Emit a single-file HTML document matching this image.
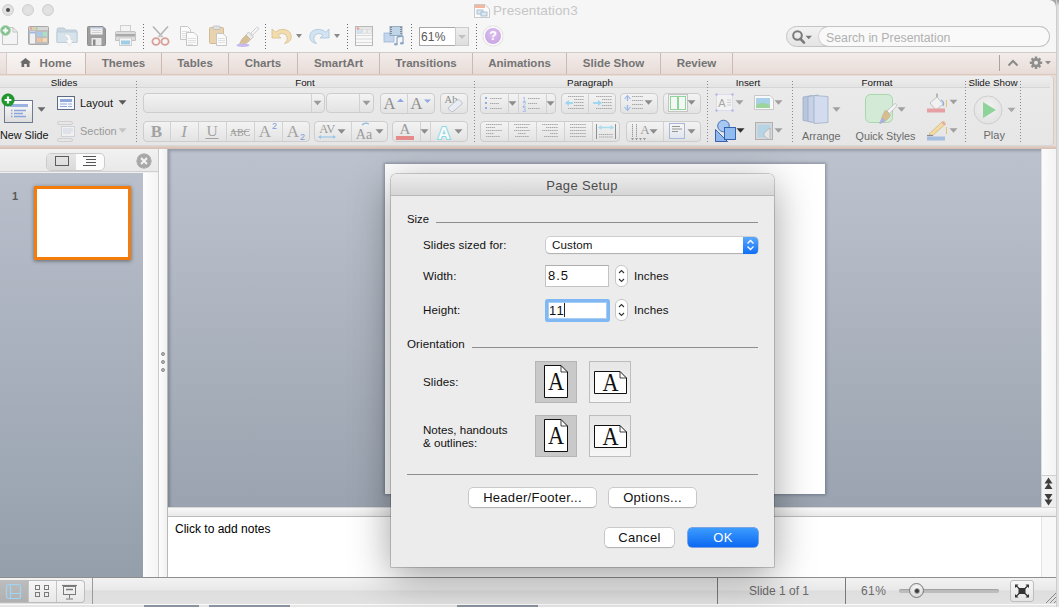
<!DOCTYPE html><html><head><meta charset="utf-8"><style>
*{margin:0;padding:0;box-sizing:border-box}
html,body{width:1059px;height:607px;overflow:hidden;background:#f6f6f6;font-family:"Liberation Sans",sans-serif}
.a{position:absolute}
svg.a{overflow:visible}
.tab{position:absolute;top:53px;height:21px;font-weight:bold;font-size:11.5px;color:#747474;text-align:center;line-height:21px;border-right:1px solid #cbb9b2}
.grp{position:absolute;top:77.2px;font-size:9.8px;color:#161616;text-align:center}
.dsep{position:absolute;width:1px;background:repeating-linear-gradient(#8a8a8a 0 1px,transparent 1px 3px)}
.tsep{position:absolute;top:24px;width:1px;height:25px;background:repeating-linear-gradient(#6a6a6a 0 1px,transparent 1px 3px)}
.bg{position:absolute;border:1px solid #cdcdcd;border-radius:4px;background:linear-gradient(#f3f3f3,#e3e3e3)}
.dv{position:absolute;top:0;bottom:0;width:1px;background:#d2d2d2}
.tri{position:absolute;width:0;height:0;border-left:4px solid transparent;border-right:4px solid transparent;border-top:5px solid #8c8c8c}
.rl{position:absolute;font-size:11px;color:#141414}
.btn{height:20px;border-radius:4px;background:#fff;box-shadow:0 0 0 .5px #a8a8a8,0 1px 1px rgba(0,0,0,.2);font-size:13px;letter-spacing:.3px;color:#111;text-align:center;line-height:20px}
</style></head><body>
<div class="a" style="left:0;top:0;width:1059px;height:52px;background:#f6f6f6"></div>
<div class="a" style="left:2px;top:4px;width:12px;height:12px;border-radius:50%;background:radial-gradient(#e4e4e4,#dcdcdc);border:1px solid #d0d0d0"></div>
<div class="a" style="left:22px;top:4px;width:12px;height:12px;border-radius:50%;background:radial-gradient(#e4e4e4,#dcdcdc);border:1px solid #d0d0d0"></div>
<div class="a" style="left:42px;top:4px;width:12px;height:12px;border-radius:50%;background:radial-gradient(#e4e4e4,#dcdcdc);border:1px solid #d0d0d0"></div>
<div class="a" style="left:6px;top:8px;width:4px;height:4px;border-radius:50%;background:#4a4a4a"></div>
<svg class="a" style="left:474px;top:4px" width="16" height="14"><path d="M.5 .5H11L15.5 5V13.5H.5Z" fill="#fbfbfb" stroke="#c9c9c9"/><rect x="1" y="1" width="10" height="3" fill="#f3b7a0"/><rect x="3" y="6" width="6" height="4" fill="#dde8f2" stroke="#9fb6cc" stroke-width=".8"/><rect x="7" y="8" width="6" height="4" fill="#dde8f2" stroke="#9fb6cc" stroke-width=".8"/></svg>
<div class="a" style="left:493px;top:3px;font-size:13.5px;color:#c6c6c6;letter-spacing:.12px">Presentation3</div>

<svg class="a" style="left:0;top:25px" width="20" height="22">
 <path d="M2.5 2.5H13L17.5 7V19.5H2.5Z" fill="#f4f4f4" stroke="#c4c4c4"/><path d="M13 2.5V7H17.5" fill="none" stroke="#c4c4c4"/>
 <circle cx="5.5" cy="5.5" r="4.8" fill="#7fc08a" stroke="#9ccca4"/><path d="M5.5 2.8V8.2M2.8 5.5H8.2" stroke="#fff" stroke-width="1.8"/></svg>
<svg class="a" style="left:28px;top:26px" width="21" height="20">
 <rect x=".5" y=".5" width="20" height="18" rx="1" fill="#bdbdbd" stroke="#a8a8a8"/><rect x="1" y="1" width="19" height="3" fill="#d8d8d8"/>
 <circle cx="3" cy="2.5" r="1.2" fill="#e9a090"/><circle cx="5.8" cy="2.5" r="1.2" fill="#e9c88a"/><circle cx="8.6" cy="2.5" r="1.2" fill="#9ed29a"/>
 <rect x="2" y="5" width="5" height="12.5" fill="#f0f0f0"/><rect x="2" y="5.5" width="5" height="2" fill="#9cb8e8"/>
 <rect x="9" y="6" width="4.5" height="4.5" fill="#a8c8f0"/><rect x="14.5" y="6" width="4.5" height="4.5" fill="#a8e0c8"/><rect x="9" y="12" width="4.5" height="4" fill="#f4c0a0"/><rect x="14.5" y="12" width="4.5" height="4" fill="#f4d8b0"/></svg>
<svg class="a" style="left:56px;top:26px" width="22" height="21">
 <path d="M1 3.5Q1 2 2.5 2H8L10 4H19.5Q21 4 21 5.5V16H1Z" fill="#c8d7e2" stroke="#b3c4d2" stroke-width=".8"/><path d="M1 6H21V16.5H1Z" fill="#d7e3ec" stroke="#b8c8d6" stroke-width=".8"/>
 <path d="M9 8Q15 8 15 14H17.5L13.5 19.5L9.5 14H12Q12 10.5 9 10Z" fill="#fafafa" stroke="#d8d8d8" stroke-width=".6"/></svg>
<svg class="a" style="left:87px;top:26px" width="19" height="20">
 <path d="M.5 1.5Q.5 .5 1.5 .5H16L18.5 3V18.5Q18.5 19.5 17.5 19.5H1.5Q.5 19.5 .5 18.5Z" fill="#9e9e9e" stroke="#8e8e8e"/>
 <rect x="3.5" y="1" width="12" height="7.5" fill="#f2f2f2"/><rect x="3.5" y="1" width="12" height="1.6" fill="#b8c8dc"/><path d="M5 4.5H14M5 6.5H14" stroke="#c8c8c8" stroke-width=".8"/>
 <rect x="4.5" y="12" width="10" height="7.5" fill="#e8e8e8"/><rect x="6" y="13.5" width="2.5" height="6" fill="#8a8a8a"/></svg>
<svg class="a" style="left:115px;top:25px" width="21" height="21">
 <rect x="5.5" y=".5" width="10" height="6" fill="#f4f4f4" stroke="#cfcfcf"/><path d="M1.5 6.5H19.5Q20.5 6.5 20.5 8V15.5H.5V8Q.5 6.5 1.5 6.5Z" fill="#dcdcdc" stroke="#c2c2c2"/>
 <rect x="1" y="9" width="19" height="2.5" fill="#a9a9a9"/><rect x="4.5" y="13" width="12" height="7.5" fill="#f6f6f6" stroke="#cdcdcd"/><rect x="6" y="15.5" width="9" height="4" fill="#a0cde6"/></svg>
<svg class="a" style="left:151px;top:26px" width="19" height="20">
 <path d="M2 .5L11.5 11M17 .5L7.5 11" stroke="#b4b4b4" stroke-width="1.6"/><circle cx="9.5" cy="10" r="1.2" fill="#ccc"/>
 <ellipse cx="5" cy="15.5" rx="3.6" ry="3.4" fill="none" stroke="#d8a096" stroke-width="1.8"/><ellipse cx="14" cy="15.5" rx="3.6" ry="3.4" fill="none" stroke="#d8a096" stroke-width="1.8"/></svg>
<svg class="a" style="left:180px;top:26px" width="19" height="20">
 <path d="M.5 .5H7.5L10.5 3.5V13.5H.5Z" fill="#fbfbfb" stroke="#c6c6c6"/><path d="M2 5.5H9M2 7.5H9M2 9.5H9M2 11.5H7" stroke="#cfcfcf" stroke-width=".6"/>
 <path d="M6.5 6.5H14L17.5 10V19.5H6.5Z" fill="#fbfbfb" stroke="#c6c6c6"/><path d="M8 12.5H16M8 14.5H16M8 16.5H16M8 18.5H13" stroke="#cfcfcf" stroke-width=".6"/></svg>
<svg class="a" style="left:209px;top:25px" width="19" height="21">
 <rect x=".5" y="2.5" width="14" height="16" rx="1" fill="#e8d3ae" stroke="#d2bb98"/><rect x="4" y="1" width="7" height="3.5" rx="1" fill="#e2e2e2" stroke="#b8b8b8" stroke-width=".7"/>
 <path d="M7.5 8.5H14L17.5 12V20.5H7.5Z" fill="#fbfbfb" stroke="#c6c6c6"/><path d="M9 13.5H16M9 15.5H16M9 17.5H16" stroke="#cfcfcf" stroke-width=".6"/></svg>
<svg class="a" style="left:236px;top:25px" width="23" height="22">
 <path d="M15 8L20.5 2.5Q22 1.5 22.5 3Q22.8 4 21.5 5L16.5 10.5Z" fill="#f6f6f6" stroke="#c4c4c4" stroke-width=".8"/>
 <path d="M12.5 7L17.5 12L14.5 14.5L10 10Z" fill="#ececec" stroke="#bdbdbd" stroke-width=".8"/>
 <path d="M10 10L14.5 14.5Q11 19.5 3 20Q5 14 10 10Z" fill="#d8c39c" stroke="#c4ad86" stroke-width=".6"/><path d="M6 16L11 12M7.5 17.5L12 13.5" stroke="#c6b08a" stroke-width=".5"/>
 <ellipse cx="7" cy="20.3" rx="6.5" ry="1.7" fill="#c6baf0"/></svg>
<svg class="a" style="left:271px;top:27px" width="22" height="18">
 <path d="M1 2V11H10L7 8.2Q8.8 6.5 11.5 6.5Q15.8 6.8 16.3 11Q16.5 14 13.5 16.5Q19.5 15.5 20.3 10.5Q20.5 3 12 2.3Q7.5 2.2 4.3 5Z" fill="#f3dcae" stroke="#d9bf8e" stroke-width=".8"/></svg>
<div class="tri" style="left:296px;top:34px;border-top-color:#8a8a8a;border-left-width:3.5px;border-right-width:3.5px;border-top-width:4px"></div>
<svg class="a" style="left:308px;top:27px" width="22" height="18">
 <path d="M21 2V11H12L15 8.2Q13.2 6.5 10.5 6.5Q6.2 6.8 5.7 11Q5.5 14 8.5 16.5Q2.5 15.5 1.7 10.5Q1.5 3 10 2.3Q14.5 2.2 17.7 5Z" fill="#d2e4f2" stroke="#a8c4dc" stroke-width=".8"/></svg>
<div class="tri" style="left:334px;top:34px;border-top-color:#8a8a8a;border-left-width:3.5px;border-right-width:3.5px;border-top-width:4px"></div>
<svg class="a" style="left:355px;top:26px" width="19" height="21">
 <rect x=".5" y=".5" width="17" height="19" fill="#f8f8f8" stroke="#b8b8b8"/><rect x="1" y="1" width="16" height="2" fill="#e6e6e6"/>
 <rect x="2" y="3.5" width="4.5" height="4" fill="#d4e4f4" stroke="#b8c8d8" stroke-width=".5"/><circle cx="3" cy="2.5" r="1.3" fill="#f0a090"/>
 <rect x="7.5" y="3.5" width="4" height="4" fill="#eee" stroke="#ccc" stroke-width=".5"/><rect x="12.5" y="3.5" width="4" height="4" fill="#eee" stroke="#ccc" stroke-width=".5"/>
 <path d="M1 9.5H17M1 13H17M1 16.5H17" stroke="#d0d0d0" stroke-width=".8"/></svg>
<svg class="a" style="left:383px;top:26px" width="22" height="20">
 <rect x="1" y="7" width="10" height="9" fill="#c3d6ee" stroke="#9eb7d6" stroke-width=".8"/>
 <rect x="7" y=".5" width="12" height="9" fill="#bed6e8" stroke="#8aa0b4" stroke-width=".8"/><path d="M8 1V9M18 1V9" stroke="#778" stroke-width="1.6" stroke-dasharray="1 1"/>
 <path d="M14 11V18M20 10V17" stroke="#8aa6c6" stroke-width="1.2"/><path d="M14 11L20 10" stroke="#8aa6c6" stroke-width="1.4"/><ellipse cx="12.8" cy="18.2" rx="1.8" ry="1.3" fill="#8aa6c6"/><ellipse cx="18.8" cy="17.2" rx="1.8" ry="1.3" fill="#8aa6c6"/></svg>

<div class="tsep" style="left:143px"></div>
<div class="tsep" style="left:265px"></div>
<div class="tsep" style="left:347px"></div>
<div class="tsep" style="left:411px"></div>
<div class="tsep" style="left:476px"></div>
<div class="a" style="left:419px;top:27px;width:36px;height:19px;background:#fff;border:1px solid #a9a9a9;border-right:none"></div>
<div class="a" style="left:455px;top:27px;width:14px;height:19px;background:linear-gradient(#eeeeee,#dedede);border:1px solid #cbcbcb"></div>
<div class="tri" style="left:458px;top:35px;border-top-color:#c2c2c2;border-left-width:4px;border-right-width:4px;border-top-width:4px"></div>
<div class="a" style="left:421px;top:29.5px;font-size:12px;color:#585858;letter-spacing:.2px">61%</div>
<div class="a" style="left:483px;top:26px;width:20px;height:20px;border-radius:50%;background:#fbfbfb;box-shadow:0 0 1px rgba(0,0,0,.35)"></div>
<div class="a" style="left:485px;top:28px;width:16px;height:16px;border-radius:50%;background:radial-gradient(circle at 50% 35%,#dcc0ef,#c49ee0)"></div>
<div class="a" style="left:485px;top:29px;width:16px;text-align:center;font-size:12.5px;font-weight:bold;color:#fff">?</div>
<div class="a" style="left:786px;top:26px;width:264px;height:21px;border-radius:10.5px;background:linear-gradient(#f2f2f2,#e4e4e4);border:1px solid #c4c4c4"></div>
<div class="a" style="left:818px;top:26px;width:232px;height:21px;border-radius:10.5px;background:#f9f9f9;border:1px solid #c4c4c4;border-left-color:#d2d2d2"></div>
<svg class="a" style="left:790px;top:29px" width="24" height="16"><circle cx="7.5" cy="6.5" r="4.3" fill="none" stroke="#7a7a7a" stroke-width="2"/><path d="M10.5 9.8L14 13.6" stroke="#7a7a7a" stroke-width="2.6" stroke-linecap="round"/><path d="M15.5 6.8H22L18.75 10.2Z" fill="#7a7a7a"/></svg>
<div class="a" style="left:826px;top:31px;font-size:12.3px;color:#b0b0b0">Search in Presentation</div>
<div class="a" style="left:0;top:52px;width:1059px;height:23px;background:linear-gradient(#f3ecea,#e7dbd6);border-top:1px solid #d0cac8"></div>
<div class="a" style="left:0;top:74px;width:1059px;height:2px;background:#dcc8bf"></div>
<div class="tab" style="left:6px;width:80px;background:linear-gradient(#f8f5f4,#f0e8e5);border-left:1px solid #d9ccc7">&nbsp;&nbsp;&nbsp;&nbsp;&nbsp;&nbsp;Home</div>
<svg class="a" style="left:20px;top:58px" width="11" height="9"><path d="M5.5 0L11 4.6H9.5V9H6.8V6H4.2V9H1.5V4.6H0Z" fill="#6a6a6a"/></svg>
<div class="tab" style="left:86px;width:76px">Themes</div>
<div class="tab" style="left:162px;width:67px">Tables</div>
<div class="tab" style="left:229px;width:69px">Charts</div>
<div class="tab" style="left:298px;width:82px">SmartArt</div>
<div class="tab" style="left:380px;width:93px">Transitions</div>
<div class="tab" style="left:473px;width:94px">Animations</div>
<div class="tab" style="left:567px;width:94px">Slide Show</div>
<div class="tab" style="left:661px;width:72px">Review</div>
<div class="a" style="left:999px;top:55px;width:1px;height:16px;background:#a9a3a0"></div>
<svg class="a" style="left:1007px;top:59px" width="12" height="8"><path d="M1.5 6.5L6 2L10.5 6.5" fill="none" stroke="#8a8a8a" stroke-width="2"/></svg>
<svg class="a" style="left:1028px;top:55px" width="24" height="16"><g transform="translate(8,7.7)" fill="#8e8e8e"><circle r="4.6"/><g stroke="#8e8e8e" stroke-width="2.4"><path d="M0 -6.2V6.2M-6.2 0H6.2M-4.4 -4.4L4.4 4.4M-4.4 4.4L4.4 -4.4"/></g><circle r="2" fill="#efe7e3"/></g><path d="M17 6H23L20 9.5Z" fill="#8e8e8e"/></svg>
<div class="a" style="left:0;top:75px;width:1059px;height:73px;background:#e8dcd7"></div>
<div class="a" style="left:0;top:76px;width:1053px;height:70px;background:linear-gradient(#ebebeb,#e6e6e6);border-radius:0 4px 4px 0;box-shadow:inset 0 -1px 0 #d7d7d7,1px 0 0 #d6c9c4"></div>
<div class="a" style="left:0;top:76px;width:1050px;height:12px;background:linear-gradient(#eeeeee,#e4e4e4);border-bottom:1px solid #d6d6d6"></div>
<div class="a" style="left:0;top:146px;width:1059px;height:3px;background:linear-gradient(#e2cfc6,#d6beb3)"></div>
<div class="grp" style="left:24px;width:80px">Slides</div>
<div class="grp" style="left:265px;width:80px">Font</div>
<div class="grp" style="left:550px;width:80px">Paragraph</div>
<div class="grp" style="left:708px;width:80px">Insert</div>
<div class="grp" style="left:837px;width:80px">Format</div>
<div class="grp" style="left:953px;width:80px">Slide Show</div>
<div class="dsep" style="left:136px;top:81px;height:62px"></div>
<div class="dsep" style="left:474px;top:81px;height:62px"></div>
<div class="dsep" style="left:707px;top:81px;height:62px"></div>
<div class="dsep" style="left:792px;top:81px;height:62px"></div>
<div class="dsep" style="left:965px;top:81px;height:62px"></div>
<div class="dsep" style="left:1020px;top:81px;height:62px"></div>
<div class="bg" style="left:143px;top:93px;width:182px;height:20px"><div class="dv" style="left:167px"></div></div>
<div class="bg" style="left:326px;top:93px;width:48px;height:20px"><div class="dv" style="left:32px"></div></div>
<div class="bg" style="left:380px;top:93px;width:55px;height:21px"><div class="dv" style="left:26px"></div></div>
<div class="bg" style="left:440px;top:93px;width:28px;height:21px"></div>
<div class="bg" style="left:143px;top:121px;width:167px;height:21px"><div class="dv" style="left:26px"></div><div class="dv" style="left:54px"></div><div class="dv" style="left:82px"></div><div class="dv" style="left:110px"></div><div class="dv" style="left:138px"></div></div>
<div class="bg" style="left:314px;top:121px;width:74px;height:21px"><div class="dv" style="left:36px"></div></div>
<div class="bg" style="left:392px;top:121px;width:76px;height:21px"><div class="dv" style="left:27px"></div><div class="dv" style="left:37px"></div></div>
<div class="bg" style="left:480px;top:93px;width:76px;height:21px"><div class="dv" style="left:27px"></div><div class="dv" style="left:37px"></div><div class="dv" style="left:65px"></div></div>
<div class="bg" style="left:561px;top:93px;width:55px;height:21px"><div class="dv" style="left:26px"></div></div>
<div class="bg" style="left:620px;top:93px;width:38px;height:21px"></div>
<div class="bg" style="left:663px;top:93px;width:38px;height:21px"></div>
<div class="bg" style="left:480px;top:121px;width:140px;height:21px"><div class="dv" style="left:27px"></div><div class="dv" style="left:55px"></div><div class="dv" style="left:83px"></div><div class="dv" style="left:111px"></div></div>
<div class="bg" style="left:626px;top:121px;width:75px;height:21px"><div class="dv" style="left:36px"></div></div>
<svg class="a" style="left:0;top:0" width="1059" height="607">
<rect x="4.5" y="100.5" width="28" height="22" fill="url(#gslide)" stroke="#6d7a90" stroke-width="1"/>
<rect x="10" y="104" width="18" height="3" fill="#9bb3e0"/>
<path d="M11 110.5h1.5M14 110.5h12M11 113.5h1.5M14 113.5h9M11 116.5h1.5M14 116.5h12" stroke="#8aa5dc" stroke-width="1.5"/>
<circle cx="8" cy="100" r="6.2" fill="#1e9a2a" stroke="#0f7a1a" stroke-width=".6"/><path d="M8 96.6V103.4M4.6 100H11.4" stroke="#fff" stroke-width="2.2"/>
<path d="M37.5 107.25H45.5L41.5 111.75Z" fill="#6a6a6a"/>
<rect x="57.5" y="96.5" width="17" height="13" fill="#f6f8fb" stroke="#5c6a82" stroke-width="1"/><rect x="60" y="99" width="12" height="3" fill="#8fa9dc"/><path d="M60 104h7M60 106.5h7M68 104h4M68 106.5h4" stroke="#8fa9dc" stroke-width="1.2"/>
<path d="M118.5 100.25H126.5L122.5 104.75Z" fill="#5a5a5a"/>
<rect x="57.5" y="121.5" width="15" height="3" rx="1.5" fill="none" stroke="#cfcfcf"/><rect x="61.5" y="126.5" width="13" height="10" fill="#f0f0f0" stroke="#cdd2da"/><path d="M63 129h10M63 131h10M63 133h8" stroke="#c5cde0" stroke-width=".8"/><rect x="57.5" y="138.5" width="15" height="3" rx="1.5" fill="none" stroke="#cfcfcf"/>
<path d="M118.5 128.25H126.5L122.5 132.75Z" fill="#c4c4c4"/>
<path d="M313.5 100.75H321.5L317.5 105.25Z" fill="#9a9a9a"/>
<path d="M362.5 100.75H370.5L366.5 105.25Z" fill="#9a9a9a"/>
<text x="389.5" y="108.5" font-family="Liberation Serif" font-size="16.5" fill="#8e8e8e" text-anchor="middle">A</text><path d="M397 102H404L400.5 98.5Z" fill="#92a8e0"/>
<text x="416.5" y="108.5" font-family="Liberation Serif" font-size="16.5" fill="#8e8e8e" text-anchor="middle">A</text><path d="M424 99.5H431L427.5 103Z" fill="#92a8e0"/>
<text x="451" y="103" font-family="Liberation Serif" font-size="10.5" fill="#8a8a8a" text-anchor="middle">Ab</text><path d="M449 107L457 100Q459 99 460.5 100.8L462 102.5Q462.5 104 461 105L453 111.5Q451.5 112 450.5 111L448.5 109Q448 108 449 107Z" fill="#e9ecf2" stroke="#a9b0bb" stroke-width=".7"/>
<text x="156.5" y="137" font-family="Liberation Serif" font-weight="bold" font-size="17" fill="#a2a2a2" text-anchor="middle">B</text>
<text x="184" y="137" font-family="Liberation Serif" font-style="italic" font-size="17" fill="#a2a2a2" text-anchor="middle">I</text>
<text x="212" y="135.5" font-family="Liberation Serif" font-size="15.5" fill="#a2a2a2" text-anchor="middle">U</text><path d="M205.5 138.5H218.5" stroke="#a2a2a2"/>
<text x="240" y="135.5" font-family="Liberation Serif" font-size="10" fill="#9a9a9a" text-anchor="middle">ABC</text><path d="M231 131.5H249" stroke="#9a9a9a" stroke-width=".8"/>
<text x="265" y="137" font-family="Liberation Serif" font-size="17" fill="#a2a2a2" text-anchor="middle">A</text><text x="274.5" y="129" font-family="Liberation Sans" font-size="9" fill="#7f98d8" text-anchor="middle">2</text>
<text x="293" y="137" font-family="Liberation Serif" font-size="17" fill="#a2a2a2" text-anchor="middle">A</text><text x="302.5" y="140" font-family="Liberation Sans" font-size="9" fill="#7f98d8" text-anchor="middle">2</text>
<text x="327" y="133" font-family="Liberation Serif" font-size="12.5" fill="#9a9a9a" text-anchor="middle" letter-spacing="-.5">AV</text><path d="M319 137H335" stroke="#9cc6e8" stroke-width="1.2"/><path d="M318 137L321 135V139ZM336 137L333 135V139Z" fill="#9cc6e8"/>
<path d="M337.5 129.25H345.5L341.5 133.75Z" fill="#8c8c8c"/>
<text x="364" y="139" font-family="Liberation Serif" font-size="14" fill="#9a9a9a" text-anchor="middle">Aa</text><path d="M362 125Q365 122 369 124" fill="none" stroke="#8fb8e0" stroke-width="1.2"/>
<path d="M375.5 129.25H383.5L379.5 133.75Z" fill="#8c8c8c"/>
<text x="405" y="134" font-family="Liberation Serif" font-size="15" fill="#9a9a9a" text-anchor="middle">A</text><rect x="396" y="136" width="18" height="4" fill="#e58a8a"/>
<path d="M420.5 129.25H428.5L424.5 133.75Z" fill="#8c8c8c"/>
<text x="444" y="139" font-family="Liberation Sans" font-weight="bold" font-size="17" fill="#fafafa" stroke="#8adbe6" stroke-width="2.2" paint-order="stroke" text-anchor="middle">A</text>
<path d="M454.5 129.25H462.5L458.5 133.75Z" fill="#8c8c8c"/>
<rect x="485" y="97" width="2" height="2" fill="#8faee6"/>
<path d="M490 98.5H502" stroke="#a8a8a8" stroke-width="1" stroke-dasharray="1.4 .5"/>
<rect x="485" y="102" width="2" height="2" fill="#8faee6"/>
<path d="M490 103.5H499" stroke="#a8a8a8" stroke-width="1" stroke-dasharray="1.4 .5"/>
<rect x="485" y="107" width="2" height="2" fill="#8faee6"/>
<path d="M490 108.5H502" stroke="#a8a8a8" stroke-width="1" stroke-dasharray="1.4 .5"/>
<path d="M508.5 101.25H516.5L512.5 105.75Z" fill="#8c8c8c"/>
<text x="524" y="102" font-family="Liberation Sans" font-size="6.5" fill="#8faee6" text-anchor="middle">1</text><text x="524" y="107" font-family="Liberation Sans" font-size="6.5" fill="#8faee6" text-anchor="middle">2</text><text x="524" y="112" font-family="Liberation Sans" font-size="6.5" fill="#8faee6" text-anchor="middle">3</text>
<path d="M528 98.5H540" stroke="#a8a8a8" stroke-width="1" stroke-dasharray="1.4 .5"/>
<path d="M528 103.5H537" stroke="#a8a8a8" stroke-width="1" stroke-dasharray="1.4 .5"/>
<path d="M528 108.5H540" stroke="#a8a8a8" stroke-width="1" stroke-dasharray="1.4 .5"/>
<path d="M546.5 101.25H554.5L550.5 105.75Z" fill="#8c8c8c"/>
<path d="M568 96.5H584" stroke="#a8a8a8" stroke-width="1" stroke-dasharray="1.4 .5"/>
<path d="M574 99.5H584" stroke="#a8a8a8" stroke-width="1" stroke-dasharray="1.4 .5"/>
<path d="M574 102.5H584" stroke="#a8a8a8" stroke-width="1" stroke-dasharray="1.4 .5"/>
<path d="M574 105.5H584" stroke="#a8a8a8" stroke-width="1" stroke-dasharray="1.4 .5"/>
<path d="M568 108.5H584" stroke="#a8a8a8" stroke-width="1" stroke-dasharray="1.4 .5"/>
<path d="M567 103H573" stroke="#9ad6f0" stroke-width="1.8"/><path d="M565 103L569 100V106Z" fill="#9ad6f0"/>
<path d="M596 96.5H612" stroke="#a8a8a8" stroke-width="1" stroke-dasharray="1.4 .5"/>
<path d="M602 99.5H612" stroke="#a8a8a8" stroke-width="1" stroke-dasharray="1.4 .5"/>
<path d="M602 102.5H612" stroke="#a8a8a8" stroke-width="1" stroke-dasharray="1.4 .5"/>
<path d="M602 105.5H612" stroke="#a8a8a8" stroke-width="1" stroke-dasharray="1.4 .5"/>
<path d="M596 108.5H612" stroke="#a8a8a8" stroke-width="1" stroke-dasharray="1.4 .5"/>
<path d="M593 103H599" stroke="#9ad6f0" stroke-width="1.8"/><path d="M602 103L598 100V106Z" fill="#9ad6f0"/>
<path d="M627.5 96V101M627.5 105V110" stroke="#9ab8e6" stroke-width="1.4"/><path d="M624.5 99L627.5 95.5L630.5 99M624.5 107L627.5 110.5L630.5 107" fill="none" stroke="#9ab8e6" stroke-width="1.1"/>
<path d="M632 96.5H643" stroke="#a8a8a8" stroke-width="1" stroke-dasharray="1.4 .5"/>
<path d="M632 100.5H643" stroke="#a8a8a8" stroke-width="1" stroke-dasharray="1.4 .5"/>
<path d="M632 104.5H643" stroke="#a8a8a8" stroke-width="1" stroke-dasharray="1.4 .5"/>
<path d="M632 108.5H643" stroke="#a8a8a8" stroke-width="1" stroke-dasharray="1.4 .5"/>
<path d="M644.5 100.25H652.5L648.5 104.75Z" fill="#8c8c8c"/>
<rect x="668.5" y="94.5" width="19" height="17" fill="#f4f4f4" stroke="#c4c4c4"/><rect x="670.5" y="96.5" width="7" height="13" fill="#f4f8f4" stroke="#8fd49a"/><rect x="678.5" y="96.5" width="7" height="13" fill="#f4f8f4" stroke="#8fd49a"/>
<path d="M687.5 100.25H695.5L691.5 104.75Z" fill="#8c8c8c"/>
<path d="M486 124.5H502" stroke="#a8a8a8" stroke-width="1" stroke-dasharray="1.4 .5"/><path d="M486 127.5H495" stroke="#a8a8a8" stroke-width="1" stroke-dasharray="1.4 .5"/><path d="M486 130.5H502" stroke="#a8a8a8" stroke-width="1" stroke-dasharray="1.4 .5"/><path d="M486 133.5H494" stroke="#a8a8a8" stroke-width="1" stroke-dasharray="1.4 .5"/><path d="M486 136.5H500" stroke="#a8a8a8" stroke-width="1" stroke-dasharray="1.4 .5"/>
<path d="M514 124.5H530" stroke="#a8a8a8" stroke-width="1" stroke-dasharray="1.4 .5"/><path d="M516 127.5H528" stroke="#a8a8a8" stroke-width="1" stroke-dasharray="1.4 .5"/><path d="M514 130.5H530" stroke="#a8a8a8" stroke-width="1" stroke-dasharray="1.4 .5"/><path d="M518 133.5H526" stroke="#a8a8a8" stroke-width="1" stroke-dasharray="1.4 .5"/><path d="M515 136.5H529" stroke="#a8a8a8" stroke-width="1" stroke-dasharray="1.4 .5"/>
<path d="M542 124.5H558" stroke="#a8a8a8" stroke-width="1" stroke-dasharray="1.4 .5"/><path d="M546 127.5H558" stroke="#a8a8a8" stroke-width="1" stroke-dasharray="1.4 .5"/><path d="M542 130.5H558" stroke="#a8a8a8" stroke-width="1" stroke-dasharray="1.4 .5"/><path d="M550 133.5H558" stroke="#a8a8a8" stroke-width="1" stroke-dasharray="1.4 .5"/><path d="M544 136.5H558" stroke="#a8a8a8" stroke-width="1" stroke-dasharray="1.4 .5"/>
<path d="M570 124.5H586" stroke="#a8a8a8" stroke-width="1" stroke-dasharray="1.4 .5"/><path d="M570 127.5H586" stroke="#a8a8a8" stroke-width="1" stroke-dasharray="1.4 .5"/><path d="M570 130.5H586" stroke="#a8a8a8" stroke-width="1" stroke-dasharray="1.4 .5"/><path d="M570 133.5H586" stroke="#a8a8a8" stroke-width="1" stroke-dasharray="1.4 .5"/><path d="M570 136.5H586" stroke="#a8a8a8" stroke-width="1" stroke-dasharray="1.4 .5"/>
<path d="M596.5 124V139M615.5 124V139" stroke="#8e8e8e"/><path d="M599 127.5H613" stroke="#a8dcef" stroke-width="1.5"/><path d="M598 127.5L601.5 125V130ZM614 127.5L610.5 125V130Z" fill="#a8dcef"/>
<path d="M599 134.5H613" stroke="#a8a8a8" stroke-width="1" stroke-dasharray="1.4 .5"/><path d="M599 137H613" stroke="#a8a8a8" stroke-width="1" stroke-dasharray="1.4 .5"/>
<path d="M632.5 124V137M636.5 124V137" stroke="#a0a0a0" stroke-dasharray="1.5 .5"/><text x="645" y="134" font-family="Liberation Serif" font-size="13" fill="#9a9a9a" text-anchor="middle">A</text>
<path d="M631 138H634L632.5 140.5ZM635 138H638L636.5 140.5ZM639 138H642L640.5 140.5ZM643 138H646L644.5 140.5Z" fill="#9a9a9a"/>
<path d="M649.5 129.25H657.5L653.5 133.75Z" fill="#8c8c8c"/>
<rect x="669.5" y="123.5" width="15" height="15" fill="url(#gbox)" stroke="#a9b8d8"/><path d="M672 126.5H680M672 129H682M672 131.5H678" stroke="#8a8a8a" stroke-width=".9"/>
<path d="M687.5 129.25H695.5L691.5 133.75Z" fill="#8c8c8c"/>
<rect x="716.5" y="94.5" width="16" height="16" fill="#f2f2f2" stroke="#c8c8ea" stroke-dasharray="1 1"/><circle cx="716.5" cy="94.5" r="1.2" fill="#b4b4ee"/><circle cx="732.5" cy="94.5" r="1.2" fill="#b4b4ee"/><circle cx="716.5" cy="110.5" r="1.2" fill="#b4b4ee"/><circle cx="732.5" cy="110.5" r="1.2" fill="#b4b4ee"/>
<text x="722" y="107" font-family="Liberation Sans" font-size="11" fill="#a6a6a6" text-anchor="middle">A</text><path d="M727 100h4M727 102.5h4M727 105h4" stroke="#c0c0c0" stroke-width=".7"/>
<path d="M735.5 100.25H743.5L739.5 104.75Z" fill="#a0a0a0"/>
<path d="M754.5 95.5H770L773.5 99V109.5H754.5Z" fill="#f8f8f8" stroke="#c8c8c8"/><rect x="756" y="98" width="14" height="10" fill="#a8d0e8"/><path d="M756 105Q762 101 770 105V108H756Z" fill="#9cd49c"/>
<path d="M774.5 100.25H782.5L778.5 104.75Z" fill="#a0a0a0"/>
<circle cx="723.5" cy="126" r="5.8" fill="#a6c8f2" stroke="#3d66b2" stroke-width=".9"/><path d="M715.5 141.5V129.5L727.5 141.5Z" fill="#8fb8ee" stroke="#2a56a8" stroke-width=".9"/><rect x="724.5" y="127.5" width="11" height="12" fill="#90bcf0" stroke="#2a56a8" stroke-width=".9"/>
<path d="M736.5 128.25H744.5L740.5 132.75Z" fill="#303030"/>
<rect x="755.5" y="122.5" width="17" height="17" fill="#d8d8d8" stroke="#b0b0b0"/><rect x="757.5" y="124.5" width="13" height="13" fill="#b6d4e6"/><path d="M764 133L770 128V140L764 136Z" fill="#e6e6e6" stroke="#a8a8a8" stroke-width=".6"/>
<path d="M774.5 128.25H782.5L778.5 132.75Z" fill="#a0a0a0"/>
<path d="M803 97L812 95.5V122L803 120.5Z" fill="#b9c5dc" stroke="#9aa8c2" stroke-width=".7"/><path d="M808 96.5L818 95V123L808 121.5Z" fill="#c6d2e6" stroke="#9aa8c2" stroke-width=".7"/><path d="M814 95.5L828 96.5V122.5L814 123.5Z" fill="#d2dcee" stroke="#9aa8c2" stroke-width=".7"/>
<path d="M832.5 107.25H840.5L836.5 111.75Z" fill="#a0a0a0"/>
<rect x="865.5" y="94.5" width="27" height="28" rx="5" fill="#d2ead6" stroke="#a6d8ac"/><path d="M887 111L894.5 104Q896.5 103 896.8 104.8Q897 105.8 896 106.6L889.5 113.5Z" fill="#f6f6f6" stroke="#b4b4b4" stroke-width=".7"/><path d="M885.5 110L890.5 115Q888 121 880 123.5Q882 115 885.5 110Z" fill="#d6be90" stroke="#c0a678" stroke-width=".5"/><path d="M879 123.8Q880.5 119.5 883 118L885.5 120.5Q882.5 123 879 123.8Z" fill="#a8b0ea"/>
<path d="M897.5 107.25H905.5L901.5 111.75Z" fill="#a0a0a0"/>
<path d="M930 103L937 97L943 104L936 110Z" fill="#f2f2f2" stroke="#b8b8b8" stroke-width=".8"/><path d="M937 97V93.5" stroke="#9a9a9a" stroke-width="1.3"/><path d="M941 100Q945 102 943 106" fill="none" stroke="#8fb0e6" stroke-width="1.2"/><rect x="927" y="108.5" width="18" height="4" fill="#e6a0a4"/><path d="M946.5 100V107" stroke="#e8c070"/>
<path d="M949.5 99.75H957.5L953.5 104.25Z" fill="#a0a0a0"/>
<path d="M929 134L942 122Q944 121 945 122.5Q946 124 944.5 125L932 136Z" fill="#f2dca0" stroke="#c8aa70" stroke-width=".6"/><path d="M942 122L945 125" stroke="#e8a0a8" stroke-width="1.6"/><path d="M927 135.5H933" stroke="#8a8a8a" stroke-width="1.2"/><rect x="927" y="136.5" width="18" height="4" fill="#a6bee0"/><path d="M946.5 127V134" stroke="#e8c070"/>
<path d="M949.5 128.25H957.5L953.5 132.75Z" fill="#a0a0a0"/>
<circle cx="988" cy="110" r="14" fill="url(#gplay)" stroke="#cfcfcf"/><path d="M983 102V118L996 110Z" fill="#8ed49a"/>
<path d="M1007.5 107.75H1015.5L1011.5 112.25Z" fill="#a8a8a8"/>
<defs><linearGradient id="gslide" x1="0" y1="0" x2="0" y2="1"><stop offset="0" stop-color="#fdfdfd"/><stop offset="1" stop-color="#dcdcdc"/></linearGradient>
<linearGradient id="gbox" x1="0" y1="0" x2="0" y2="1"><stop offset="0" stop-color="#f8f8f8"/><stop offset="1" stop-color="#dfe4ee"/></linearGradient>
<radialGradient id="gplay" cx=".5" cy=".4" r=".6"><stop offset="0" stop-color="#f2f2f2"/><stop offset="1" stop-color="#e2e2e2"/></radialGradient></defs>
</svg>
<div class="rl" style="left:0px;top:129px;font-size:10.8px">New Slide</div>
<div class="rl" style="left:80px;top:97px;font-size:11px">Layout</div>
<div class="rl" style="left:80px;top:125px;font-size:11px;color:#9a9a9a">Section</div>
<div class="rl" style="left:802px;top:129.5px;color:#6a6a6a;font-size:10.8px">Arrange</div>
<div class="rl" style="left:855.5px;top:129.5px;color:#6a6a6a;font-size:10.8px">Quick Styles</div>
<div class="rl" style="left:983.5px;top:129px;color:#6a6a6a;font-size:11px">Play</div>
<!-- content -->
<div class="a" style="left:0;top:149px;width:1059px;height:459px;background:#f0f0f0"></div>
<div class="a" style="left:0;top:149px;width:158px;height:23px;background:linear-gradient(#f1f1f1,#e9e9e9);border-bottom:1px solid #d0d0d0"></div>
<div class="a" style="left:46px;top:153px;width:59px;height:18px;border-radius:5px;background:#fbfbfb;border:1px solid #cbcbcb"></div>
<div class="a" style="left:47px;top:154px;width:29px;height:16px;border-radius:4px 0 0 4px;background:linear-gradient(#e6e6e6,#dadada)"></div>
<div class="a" style="left:55px;top:156px;width:14px;height:10px;border:1.5px solid #5c5c5c"></div>
<svg class="a" style="left:82px;top:155px" width="16" height="12"><path d="M1 1.5H14M4 4.5H14M4 7.5H14M1 10.5H14" stroke="#555" stroke-width="1.1"/></svg>
<div class="a" style="left:137px;top:154px;width:14px;height:14px;border-radius:50%;background:radial-gradient(#b4b4b4,#9c9c9c);box-shadow:0 0 0 .5px #8a8a8a"></div>
<svg class="a" style="left:137px;top:154px" width="14" height="14"><path d="M4 4L10 10M10 4L4 10" stroke="#f4f4f4" stroke-width="1.8"/></svg>
<div class="a" style="left:0;top:173px;width:143px;height:404px;background:linear-gradient(#b9bfcb,#959fac)"></div>
<div class="a" style="left:143px;top:173px;width:15px;height:404px;background:linear-gradient(90deg,#fdfdfd,#f4f4f4)"></div>
<div class="a" style="left:158px;top:149px;width:1px;height:428px;background:#c9c9c9"></div>
<div class="a" style="left:159px;top:149px;width:9px;height:428px;background:linear-gradient(90deg,#fdfdfd,#f0f0f0);border-right:1px solid #b9b9b9"></div>
<div class="a" style="left:161px;top:352px;width:4px;height:4px;border-radius:50%;background:#bdbdbd;border:.5px solid #888"></div>
<div class="a" style="left:161px;top:360px;width:4px;height:4px;border-radius:50%;background:#bdbdbd;border:.5px solid #888"></div>
<div class="a" style="left:161px;top:368px;width:4px;height:4px;border-radius:50%;background:#bdbdbd;border:.5px solid #888"></div>
<div class="a" style="left:12px;top:190px;font-size:11px;font-weight:bold;color:#5a5a5a">1</div>
<div class="a" style="left:34px;top:186px;width:97px;height:74px;background:#fff;border:3px solid #f47c0c;box-shadow:0 1px 4px rgba(0,0,0,.45)"></div>

<div class="a" style="left:168px;top:149px;width:873px;height:358px;background:linear-gradient(#bdc3ce,#9aa3af);box-shadow:inset 2px 2px 3px rgba(40,50,70,.28)"></div>
<div class="a" style="left:1041px;top:149px;width:15px;height:358px;background:linear-gradient(90deg,#fbfbfb,#f3f3f3);border-left:1px solid #dedede"></div>
<div class="a" style="left:1041px;top:475px;width:15px;height:32px;background:linear-gradient(90deg,#f4f4f4,#ececec);border-top:1px solid #cfcfcf;border-left:1px solid #d6d6d6"></div>
<svg class="a" style="left:1041px;top:476px" width="15" height="31"><path d="M3.5 7.5L7.5 1.5L11.5 7.5ZM3.5 13L7.5 7L11.5 13ZM3.5 18L7.5 24L11.5 18ZM3.5 23.5L7.5 29.5L11.5 23.5Z" fill="#3e3e3e"/></svg>
<div class="a" style="left:1056px;top:149px;width:3px;height:459px;background:#e4e4e4;border-left:1px solid #c8c8c8"></div>
<div class="a" style="left:168px;top:507px;width:888px;height:10px;background:linear-gradient(#f8f8f8,#e9e9e9);border-top:1px solid #d8d8d8;border-bottom:1px solid #bcbcbc"></div>
<div class="a" style="left:168px;top:517px;width:873px;height:60px;background:#fff"></div>
<div class="a" style="left:1041px;top:517px;width:15px;height:60px;background:#f8f8f8;border-left:1px solid #e2e2e2"></div>
<div class="a" style="left:175px;top:522px;font-size:12px;color:#000">Click to add notes</div>

<!-- slide -->
<div class="a" style="left:385px;top:164px;width:440px;height:330px;background:#fff;box-shadow:0 0 3px 1px rgba(50,60,80,.42)"></div>

<!-- status bar -->
<div class="a" style="left:0;top:577px;width:1059px;height:1px;background:#8e8e8e"></div>
<div class="a" style="left:0;top:578px;width:1059px;height:26px;background:linear-gradient(#f2f2f2 0%,#e9e9e9 45%,#dedede 50%,#e2e2e2 100%)"></div>
<div class="a" style="left:0;top:604px;width:1059px;height:3px;background:#e6e6e6;border-top:1px solid #fafafa"></div>
<div class="a" style="left:144px;top:605px;width:55px;height:2px;background:#8a93a0"></div>
<div class="a" style="left:209px;top:605px;width:81px;height:2px;background:#8a93a0"></div>
<div class="a" style="left:457px;top:605px;width:81px;height:2px;background:#8a93a0"></div>
<div class="a" style="left:0;top:580px;width:85px;height:23px;border-radius:0 4px 4px 0;background:linear-gradient(#f6f6f6,#e8e8e8);border:1px solid #bdbdbd;border-left:none"></div>
<div class="a" style="left:0;top:581px;width:28px;height:21px;background:linear-gradient(#bcbcbc,#b0b0b0)"></div>
<div class="a" style="left:28px;top:581px;width:1px;height:21px;background:#c4c4c4"></div>
<div class="a" style="left:56px;top:581px;width:1px;height:21px;background:#c4c4c4"></div>
<svg class="a" style="left:0;top:580px" width="85" height="23"><rect x="6.5" y="4.5" width="14" height="14" rx="2" fill="none" stroke="#9fd4f4" stroke-width="1.2"/><path d="M10.5 5V18M11 13.5H20" stroke="#9fd4f4" stroke-width="1.2"/>
<rect x="35.5" y="5.5" width="4" height="4" fill="none" stroke="#7a7a7a"/><rect x="44.5" y="5.5" width="4" height="4" fill="none" stroke="#7a7a7a"/><rect x="35.5" y="12.5" width="4" height="4" fill="none" stroke="#7a7a7a"/><rect x="44.5" y="12.5" width="4" height="4" fill="none" stroke="#7a7a7a"/>
<path d="M62 5.5H77" stroke="#7a7a7a" stroke-width="1.2"/><rect x="63.5" y="6.5" width="12" height="8" fill="none" stroke="#7a7a7a"/><path d="M66 9.5H73" stroke="#7a7a7a" stroke-width="1.5"/><path d="M69.5 15V18.5M66 19H73" stroke="#7a7a7a"/></svg>
<div class="a" style="left:92px;top:578px;width:1px;height:26px;background:#9a9a9a"></div>
<div class="a" style="left:717px;top:578px;width:1px;height:26px;background:#7a7a7a"></div>
<div class="a" style="left:845px;top:578px;width:1px;height:26px;background:#7a7a7a"></div>
<div class="a" style="left:749px;top:584px;font-size:12px;color:#6a6a6a">Slide 1 of 1</div>
<div class="a" style="left:861px;top:584px;font-size:12px;color:#6a6a6a;letter-spacing:.4px">61%</div>
<div class="a" style="left:899px;top:589px;width:100px;height:4px;border-radius:2px;background:#bdbdbd;box-shadow:inset 0 1px 1px rgba(0,0,0,.15)"></div>
<div class="a" style="left:909px;top:583px;width:15px;height:15px;border-radius:50%;background:radial-gradient(circle at 50% 35%,#fdfdfd,#cfcfcf);border:1px solid #7a7a7a"></div>
<div class="a" style="left:913.5px;top:587.5px;width:6px;height:6px;border-radius:50%;background:#3a3a3a;border:1.5px solid #a8a8a8"></div>
<div class="a" style="left:1010px;top:580px;width:24px;height:22px;border-radius:3px;background:linear-gradient(#f8f8f8,#e4e4e4);border:1px solid #bebebe"></div>
<svg class="a" style="left:1010px;top:580px" width="24" height="22"><rect x="8.5" y="8" width="7" height="6" fill="#333"/><path d="M6 5.5L9 8.5M18 5.5L15 8.5M6 16.5L9 13.5M18 16.5L15 13.5" stroke="#333" stroke-width="1.2"/><path d="M5 4.5H8.5L5 8ZM19 4.5H15.5L19 8ZM5 17.5H8.5L5 14ZM19 17.5H15.5L19 14Z" fill="#333"/></svg>
<svg class="a" style="left:1044px;top:591px" width="13" height="13"><path d="M12 2L2 12M12 6L6 12M12 10L10 12" stroke="#8a8a8a" stroke-width="1"/></svg>

<!-- dialog shadow + body -->
<div class="a" style="left:391px;top:174px;width:383px;height:393px;background:#ececec;border-radius:5px 5px 0 0;box-shadow:0 10px 40px rgba(0,0,0,.38),0 0 0 .5px rgba(0,0,0,.35)"></div>
<div class="a" style="left:391px;top:174px;width:383px;height:21.5px;background:linear-gradient(#ececec,#d6d6d6);border-radius:5px 5px 0 0;border-bottom:1px solid #b8b8b8"></div>
<div class="a" style="left:390px;top:178px;width:384px;text-align:center;font-size:13px;color:#4d4d4d;letter-spacing:.35px">Page Setup</div>

<div class="a" style="left:1056px;top:0;width:3px;height:607px;background:linear-gradient(#9a9a9a 0,#dedede 6px,#e4e4e4 100%);border-left:1px solid #cdcdcd"></div>
<svg class="a" style="left:1049px;top:0" width="10" height="8"><path d="M0 0H7V7A7 7 0 0 0 0 0Z" fill="#a8a8a8"/></svg>
<!-- dialog content -->
<div class="a" style="left:407px;top:213px;font-size:11.3px;color:#111">Size</div>
<div class="a" style="left:436px;top:222px;width:322px;height:1px;background:#8e8e8e"></div>
<div class="a" style="left:423px;top:238px;font-size:11.6px;color:#111;letter-spacing:.1px">Slides sized for:</div>
<div class="a" style="left:546px;top:237px;width:212px;height:16px;border-radius:4px;background:#fff;box-shadow:0 0 0 .5px #b0b0b0,0 1px 1px rgba(0,0,0,.25)"></div>
<div class="a" style="left:743px;top:236.5px;width:15px;height:17px;border-radius:0 4px 4px 0;background:linear-gradient(#5aa9ff,#0f6ff5)"></div>
<svg class="a" style="left:743px;top:236px" width="15" height="18"><path d="M4.5 7.5 L7.5 4.5 L10.5 7.5 M4.5 10.5 L7.5 13.5 L10.5 10.5" stroke="#fff" stroke-width="1.3" fill="none"/></svg>
<div class="a" style="left:552px;top:238px;font-size:11.6px;color:#111;letter-spacing:.1px">Custom</div>

<div class="a" style="left:423px;top:269px;font-size:11.6px;color:#111;letter-spacing:.1px">Width:</div>
<div class="a" style="left:545px;top:265px;width:64px;height:22px;background:#fff;border:1px solid #c3c3c3;border-top-color:#adadad"></div>
<div class="a" style="left:548px;top:268px;font-size:13px;color:#111;letter-spacing:.9px">8.5</div>
<div class="a" style="left:615px;top:265px;width:13px;height:22px;border-radius:6px;background:#fff;border:1px solid #c6c6c6"></div>
<svg class="a" style="left:615px;top:265px" width="13" height="22"><path d="M4 8 L6.5 5.5 L9 8 M4 14 L6.5 16.5 L9 14" stroke="#333" stroke-width="1.1" fill="none"/></svg>
<div class="a" style="left:634px;top:269px;font-size:11.6px;color:#111;letter-spacing:.1px">Inches</div>

<div class="a" style="left:423px;top:303px;font-size:11.6px;color:#111;letter-spacing:.1px">Height:</div>
<div class="a" style="left:544.5px;top:298.5px;width:65px;height:23px;background:#fff;border-radius:3px;box-shadow:inset 0 0 0 3px #80b8f3,inset 0 0 0 4px #a8cdf5"></div>
<div class="a" style="left:548px;top:303px;left:549px;font-size:13px;color:#111;letter-spacing:1.2px">11</div>
<div class="a" style="left:564px;top:303px;width:1px;height:14px;background:#222"></div>
<div class="a" style="left:615px;top:299px;width:13px;height:22px;border-radius:6px;background:#fff;border:1px solid #c6c6c6"></div>
<svg class="a" style="left:615px;top:299px" width="13" height="22"><path d="M4 8 L6.5 5.5 L9 8 M4 14 L6.5 16.5 L9 14" stroke="#333" stroke-width="1.1" fill="none"/></svg>
<div class="a" style="left:634px;top:303px;font-size:11.6px;color:#111;letter-spacing:.1px">Inches</div>

<div class="a" style="left:407px;top:337px;font-size:11.6px;color:#111;letter-spacing:.1px">Orientation</div>
<div class="a" style="left:472px;top:347px;width:286px;height:1px;background:#8e8e8e"></div>
<div class="a" style="left:423px;top:375px;font-size:11.6px;color:#111;letter-spacing:.1px">Slides:</div>
<div class="a" style="left:423px;top:423px;font-size:11.6px;color:#111;line-height:13px">Notes, handouts<br>&amp; outlines:</div>

<div class="a" style="left:535px;top:361px;width:42px;height:42px;background:#c9c9c9;border:1px solid #b5b5b5"></div>
<div class="a" style="left:589px;top:361px;width:42px;height:42px;background:linear-gradient(#e6e6e6,#f6f6f6);border:1px solid #bdbdbd"></div>
<div class="a" style="left:535px;top:415px;width:42px;height:42px;background:#c9c9c9;border:1px solid #b5b5b5"></div>
<div class="a" style="left:589px;top:415px;width:42px;height:42px;background:linear-gradient(#e6e6e6,#f6f6f6);border:1px solid #bdbdbd"></div>
<svg class="a" style="left:535px;top:361px" width="42" height="42"><path d="M9.5 4.5 H26 L32.5 11 V36.5 H9.5 Z" fill="#fff" stroke="#111" stroke-width="1"/><path d="M26 4.5 V11 H32.5" fill="none" stroke="#111" stroke-width=".8"/><text x="21" y="29" font-family="Liberation Serif" font-size="25" textLength="16" lengthAdjust="spacingAndGlyphs" text-anchor="middle" fill="#111">A</text></svg>
<svg class="a" style="left:589px;top:361px" width="42" height="42"><path d="M5.5 10.5 H31 L37.5 17 V32.5 H5.5 Z" fill="#fff" stroke="#111" stroke-width="1"/><path d="M31 10.5 V17 H37.5" fill="none" stroke="#111" stroke-width=".8"/><text x="21.5" y="30" font-family="Liberation Serif" font-size="25" textLength="16" lengthAdjust="spacingAndGlyphs" text-anchor="middle" fill="#111">A</text></svg>
<svg class="a" style="left:535px;top:415px" width="42" height="42"><path d="M9.5 4.5 H26 L32.5 11 V36.5 H9.5 Z" fill="#fff" stroke="#111" stroke-width="1"/><path d="M26 4.5 V11 H32.5" fill="none" stroke="#111" stroke-width=".8"/><text x="21" y="29" font-family="Liberation Serif" font-size="25" textLength="16" lengthAdjust="spacingAndGlyphs" text-anchor="middle" fill="#111">A</text></svg>
<svg class="a" style="left:589px;top:415px" width="42" height="42"><path d="M5.5 10.5 H31 L37.5 17 V32.5 H5.5 Z" fill="#fff" stroke="#111" stroke-width="1"/><path d="M31 10.5 V17 H37.5" fill="none" stroke="#111" stroke-width=".8"/><text x="21.5" y="30" font-family="Liberation Serif" font-size="25" textLength="16" lengthAdjust="spacingAndGlyphs" text-anchor="middle" fill="#111">A</text></svg>

<div class="a" style="left:407px;top:474px;width:351px;height:1px;background:#8e8e8e"></div>
<div class="btn a" style="left:469px;top:488px;width:127px;height:19px;line-height:19px">Header/Footer...</div>
<div class="btn a" style="left:609px;top:488px;width:87px;height:19px;line-height:19px">Options...</div>
<div class="btn a" style="left:605px;top:528px;width:69px;height:19px;line-height:19px">Cancel</div>
<div class="a" style="left:688px;top:528px;width:70px;height:19px;border-radius:4px;background:linear-gradient(#3d9cff,#0b68f2);box-shadow:0 0 0 .5px #0a58d8;color:#fff;font-size:13px;letter-spacing:.3px;text-align:center;line-height:19px">OK</div>

</body></html>
